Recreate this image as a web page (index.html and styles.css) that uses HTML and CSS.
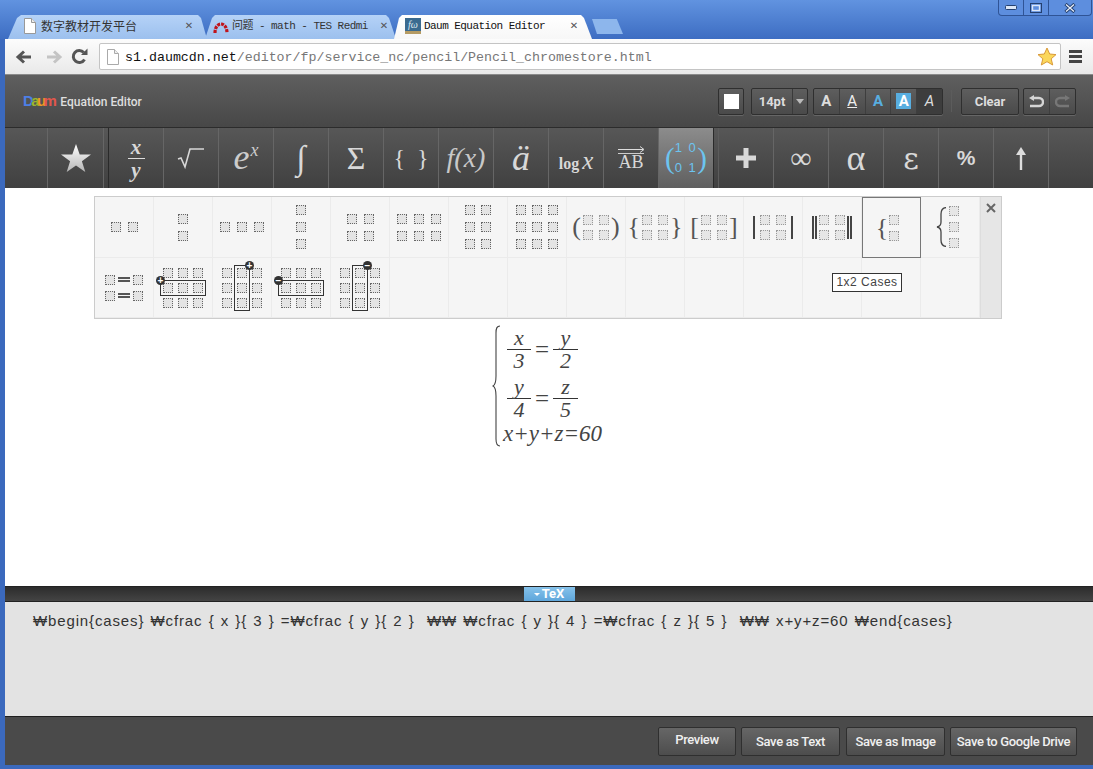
FILE: index.html
```html
<!DOCTYPE html>
<html lang="en">
<head>
    <meta charset="UTF-8">
    <title>Daum Equation Editor</title>
    <link rel="stylesheet" href="styles.css">
</head>
<body>
    <!-- Browser tabs -->
    <div class="tabstrip">
        <div class="tab tab-first">
            <svg class="favicon" viewBox="0 0 16 16"><path d="M2.500.5h7l4 4v11h-11z" fill="#fff" stroke="#999"/><path d="M9.500.5v4h4" fill="#eee" stroke="#999"/></svg>
            <span class="tab-title">数字教材开发平台</span>
            <span class="tab-close">✕</span>
        </div>
        <div class="tab tab-second">
            <svg class="favicon" viewBox="0 0 16 16"><path d="M2 15C2 3 14 3 14 15" fill="none" stroke="#c0141c" stroke-width="3.200" stroke-dasharray="3 1"/></svg>
            <span class="tab-title mono">问题 - math - TES Redmi</span>
            <span class="tab-close">✕</span>
        </div>
        <div class="tab active">
            <span class="fx-icon">fω</span>
            <span class="tab-title mono">Daum Equation Editor</span>
            <span class="tab-close">✕</span>
        </div>
        <div class="newtab"></div>
        <div class="winctl">
            <span class="wbtn w-min"><svg width="12" height="6" viewBox="0 0 12 6"><rect x=".5" y=".5" width="11" height="4" rx="1" fill="#dbe6f7" stroke="#24406f"/></svg></span>
            <span class="wbtn w-max"><svg width="12" height="10" viewBox="0 0 12 10"><rect x=".5" y=".5" width="11" height="9" fill="none" stroke="#24406f"/><rect x="2.500" y="2.500" width="7" height="5" fill="none" stroke="#dbe6f7" stroke-width="1.400"/></svg></span>
            <span class="wbtn w-close"><svg width="12" height="10" viewBox="0 0 12 10"><path d="M1.500 1l9 8M10.500 1l-9 8" stroke="#24406f" stroke-width="3.200"/><path d="M2 1.500l8 7M10 1.500l-8 7" stroke="#e8eef9" stroke-width="1.300"/></svg></span>
        </div>
    </div>

    <div class="window">
        <!-- Browser toolbar -->
        <div class="navbar">
            <svg class="nav-btn" width="18" height="16" viewBox="0 0 18 16"><path d="M16 8H4M9 2.500L3 8l6 5.500" fill="none" stroke="#555" stroke-width="3"/></svg>
            <svg class="nav-btn nav-fwd" width="18" height="16" viewBox="0 0 18 16"><path d="M2 8h12M9 2.500L15 8l-6 5.500" fill="none" stroke="#c4c4c4" stroke-width="3"/></svg>
            <svg class="nav-btn nav-reload" width="17" height="17" viewBox="0 0 17 17"><path d="M13.500 11.500A6 6 0 1 1 12.800 4.500" fill="none" stroke="#555" stroke-width="3"/><path d="M10 7h6.500V.5z" fill="#555"/></svg>
            <div class="omnibox">
                <svg width="12" height="16" viewBox="0 0 12 16"><path d="M.5.500h7l4 4v11H.5z" fill="#fff" stroke="#aaa"/><path d="M7.500.5v4h4" fill="#eee" stroke="#aaa"/></svg>
                <span class="url"><b>s1.daumcdn.net</b>/editor/fp/service_nc/pencil/Pencil_chromestore.html</span>
                <svg class="bookmark" width="20" height="19" viewBox="0 0 20 19"><path d="M10 1l2.700 6 6.300.6-4.800 4.200 1.500 6.200L10 14.700 4.300 18l1.500-6.200L1 7.600 7.300 7z" fill="#fbd75b" stroke="#d99a3a"/></svg>
            </div>
            <div class="menu-btn"><i></i><i></i><i></i></div>
        </div>

        <!-- Editor header -->
        <div class="head">
            <div class="logo"><span class="logo-d">D</span><span class="logo-a">a</span><span class="logo-u">u</span><span class="logo-m">m</span><span class="logo-text">Equation Editor</span></div>
            <div class="head-tools">
                <div class="hbtn colorbtn"><i></i></div>
                <div class="hbtn sizebtn"><span class="size-val">14pt</span><span class="size-arrow"></span></div>
                <div class="hbtn agroup">
                    <span class="a-cell">A</span>
                    <span class="a-cell a-under">A</span>
                    <span class="a-cell a-blue">A</span>
                    <span class="a-cell"><span class="a-fill">A</span></span>
                    <span class="a-cell a-italic">A</span>
                </div>
                <div class="head-sep"></div>
                <div class="hbtn clearbtn">Clear</div>
                <div class="hbtn undogroup">
                    <span class="u-cell"><svg width="15" height="13" viewBox="0 0 15 13"><path d="M4 3h6a3.500 3.500 0 0 1 0 8H1" fill="none" stroke="#d5d5d5" stroke-width="2.400"/><path d="M5 0v6L0 3z" fill="#d5d5d5"/></svg></span>
                    <span class="u-cell"><svg width="15" height="13" viewBox="0 0 15 13"><path d="M11 3H5a3.500 3.500 0 0 0 0 8h9" fill="none" stroke="#777" stroke-width="2.400"/><path d="M10 0v6l5-3z" fill="#777"/></svg></span>
                </div>
            </div>
        </div>

        <!-- Symbol categories -->
        <div class="toolbar">
            <div class="tool first"></div>
            <div class="tool star">
                <svg width="30" height="29" viewBox="0 0 30 29"><defs><linearGradient id="starfill" x1="0" y1="0" x2="0" y2="1"><stop offset="0" stop-color="#fff"/><stop offset="1" stop-color="#b5b5b5"/></linearGradient></defs><path d="M15 0l3.700 10.500H30l-9.100 6.700L24.300 28 15 21.400 5.700 28l3.400-10.800L0 10.500h11.300z" fill="url(#starfill)"/></svg>
            </div>
            <div class="tool-gap"></div>
            <div class="tool"><span class="t-frac"><span>x</span><span>y</span></span></div>
            <div class="tool"><svg width="28" height="24" viewBox="0 0 28 24"><path d="M1 13l3-1 4 9 5-18h14" fill="none" stroke="#d8d8d8" stroke-width="1.600"/></svg></div>
            <div class="tool t-exp">e<sup>x</sup></div>
            <div class="tool t-int">∫</div>
            <div class="tool t-sum">Σ</div>
            <div class="tool t-brace">{&nbsp;&nbsp;}</div>
            <div class="tool t-fx">f(x)</div>
            <div class="tool t-acc">ä</div>
            <div class="tool t-log"><b>log</b><i>x</i></div>
            <div class="tool"><span class="t-vec"><svg width="27" height="7" viewBox="0 0 27 7"><path d="M0 3.500h25M22 .5l4 3-4 3" fill="none" stroke="#ddd"/></svg><span>AB</span></span></div>
            <div class="tool active"><span class="t-mat"><span class="mat-p">(</span><span class="mat-v">1 0<br>0 1</span><span class="mat-p">)</span></span></div>
            <div class="tool-gap narrow"></div>
            <div class="tool"><svg width="22" height="22" viewBox="0 0 22 22"><path d="M11 1v20M1 11h20" stroke="#d8d8d8" stroke-width="5"/></svg></div>
            <div class="tool t-inf">∞</div>
            <div class="tool t-alpha">α</div>
            <div class="tool t-eps">ε</div>
            <div class="tool t-pct">%</div>
            <div class="tool"><svg width="12" height="23" viewBox="0 0 12 23"><path d="M6 23V5" stroke="#ddd" stroke-width="2.400"/><path d="M6 0l5 8H1z" fill="#ddd"/></svg></div>
        </div>

        <!-- Canvas -->
        <div class="canvas">
            <div class="popup">
                <div class="cell"><span class="mx c2"><i></i><i></i></span></div>
                <div class="cell"><span class="mx c1 wide"><i></i><i></i></span></div>
                <div class="cell"><span class="mx c3"><i></i><i></i><i></i></span></div>
                <div class="cell"><span class="mx c1 wide"><i></i><i></i><i></i></span></div>
                <div class="cell"><span class="mx c2"><i></i><i></i><i></i><i></i></span></div>
                <div class="cell"><span class="mx c3"><i></i><i></i><i></i><i></i><i></i><i></i></span></div>
                <div class="cell"><span class="mx c2 wide"><i></i><i></i><i></i><i></i><i></i><i></i></span></div>
                <div class="cell"><span class="mx c3 wide"><i></i><i></i><i></i><i></i><i></i><i></i><i></i><i></i><i></i></span></div>
                <div class="cell"><span class="fence">(</span><span class="mx c2 tight"><i></i><i></i><i></i><i></i></span><span class="fence">)</span></div>
                <div class="cell"><span class="fence">{</span><span class="mx c2 tight"><i></i><i></i><i></i><i></i></span><span class="fence">}</span></div>
                <div class="cell"><span class="fence">[</span><span class="mx c2 tight"><i></i><i></i><i></i><i></i></span><span class="fence">]</span></div>
                <div class="cell"><span class="bar"></span><span class="mx c2 tight"><i></i><i></i><i></i><i></i></span><span class="bar"></span></div>
                <div class="cell"><span class="bar dbl"></span><span class="mx c2 tight"><i></i><i></i><i></i><i></i></span><span class="bar dbl"></span></div>
                <div class="cell selected"><span class="fence pull">{</span><span class="mx c1 tight"><i></i><i></i></span></div>
                <div class="cell big-cases"><svg width="11" height="40" viewBox="0 0 11 40"><path d="M10 .5C6 1 5 3 5 7v8c0 3-1 4.500-4 5 3 .5 4 2 4 5v8c0 4 1 6 5 6.500" fill="none" stroke="#444" stroke-width="1.300"/></svg><span class="mx c1 tight"><i></i><i></i><i></i></span></div>
                <div class="closecol"><svg width="10" height="10" viewBox="0 0 10 10"><path d="M1 1l8 8M9 1l-8 8" stroke="#666" stroke-width="2"/></svg></div>

                <div class="cell"><span class="eqs"><i></i><b></b><i></i><i></i><b></b><i></i></span></div>
                <div class="cell"><span class="mx c3 ins"><i></i><i></i><i></i><i></i><i></i><i></i><i></i><i></i><i></i><span class="hl row"></span><span class="badge row-b">+</span></span></div>
                <div class="cell"><span class="mx c3 ins"><i></i><i></i><i></i><i></i><i></i><i></i><i></i><i></i><i></i><span class="hl col"></span><span class="badge col-b">+</span></span></div>
                <div class="cell"><span class="mx c3 ins"><i></i><i></i><i></i><i></i><i></i><i></i><i></i><i></i><i></i><span class="hl row"></span><span class="badge row-b">−</span></span></div>
                <div class="cell"><span class="mx c3 ins"><i></i><i></i><i></i><i></i><i></i><i></i><i></i><i></i><i></i><span class="hl col"></span><span class="badge col-b">−</span></span></div>
                <div class="cell"></div>
                <div class="cell"></div>
                <div class="cell"></div>
                <div class="cell"></div>
                <div class="cell"></div>
                <div class="cell"></div>
                <div class="cell"></div>
                <div class="cell"></div>
                <div class="cell"></div>
                <div class="cell"></div>

                <div class="tooltip">1x2 Cases</div>
            </div>

            <div class="equation">
                <svg class="brace" width="9" height="122" viewBox="0 0 9 122"><path d="M8 1C5 1 4 3 4 8v43c0 6-1 9-3 10 2 1 3 4 3 10v43c0 5 1 7 4 7" fill="none" stroke="#444" stroke-width="1.100"/></svg>
                <div class="eq-rows">
                    <div class="eq-row"><span class="frac"><span>x</span><span>3</span></span><span class="eq-sign">=</span><span class="frac"><span>y</span><span>2</span></span></div>
                    <div class="eq-row"><span class="frac"><span>y</span><span>4</span></span><span class="eq-sign">=</span><span class="frac"><span>z</span><span>5</span></span></div>
                    <div class="eq-line">x+y+z=60</div>
                </div>
            </div>
        </div>

        <!-- TeX source -->
        <div class="texbar"><span class="textab"><i></i>TeX</span></div>
        <div class="texarea">₩begin{cases} ₩cfrac { x }{ 3 } =₩cfrac { y }{ 2 }  ₩₩ ₩cfrac { y }{ 4 } =₩cfrac { z }{ 5 }  ₩₩ x+y+z=60 ₩end{cases}</div>

        <div class="footer">
            <button class="fbtn preview">Preview</button>
            <button class="fbtn">Save as Text</button>
            <button class="fbtn">Save as Image</button>
            <button class="fbtn">Save to Google Drive</button>
        </div>
    </div>
</body>
</html>
```

FILE: styles.css
```css
* {
    box-sizing: border-box;
}
html, body {
    margin: 0;
    height: 769px;
    overflow: hidden;
}
body {
    display: flex;
    flex-direction: column;
    background: #3b69bd;
    font-family: "Liberation Sans", Arial, sans-serif;
}

/* tabs */
.tabstrip {
    display: flex;
    align-items: flex-end;
    flex: none;
    height: 39px;
    padding-left: 8px;
    background: linear-gradient(#6193e0, #3d6dc2);
}
.tab {
    display: flex;
    align-items: center;
    flex: none;
    height: 24px;
    gap: 3px;
    padding-bottom: 2px;
    background: linear-gradient(#b5d2f7, #9cc0ee);
    clip-path: polygon(0 100%, 7px 3px, 10px 0, calc(100% - 10px) 0, calc(100% - 7px) 3px, 100% 100%);
}
.tab-first {
    width: 199px;
    margin-right: -2px;
    padding-left: 14px;
    padding-right: 12px;
    clip-path: polygon(0 100%, 9px 3px, 13px 0, calc(100% - 9px) 0, calc(100% - 6px) 3px, 100% 100%);
}
.tab-second {
    width: 191px;
    margin-right: -2px;
    padding-left: 8px;
    padding-right: 6px;
}
.tab.active {
    width: 198px;
    padding-left: 11px;
    padding-right: 12px;
    background: linear-gradient(#fff, #f7f7f7);
    clip-path: polygon(0 100%, 5px 3px, 8px 0, calc(100% - 11px) 0, calc(100% - 8px) 3px, 100% 100%);
}
.favicon {
    width: 16px;
    height: 16px;
    flex: none;
}
.fx-icon {
    flex: none;
    width: 16px;
    height: 16px;
    background: #3a6a8f;
    border-bottom: 3px solid #b59b64;
    color: #dfe9f0;
    font: italic 10px/13px "Liberation Serif", serif;
    text-align: center;
}
.tab-title {
    flex: 1;
    min-width: 0;
    overflow: hidden;
    white-space: nowrap;
    color: #333;
    font: 12px/16px "Noto Sans CJK SC", sans-serif;
}
.tab-title.mono {
    font: 11px/16px "Liberation Mono", "Noto Sans CJK SC", monospace;
    letter-spacing: -.55px;
}
.tab.active .tab-title {
    color: #111;
}
.tab-close {
    flex: none;
    width: 12px;
    color: #555;
    font: bold 10px/16px "DejaVu Sans", sans-serif;
    text-align: center;
}
.newtab {
    flex: none;
    width: 31px;
    height: 15px;
    margin-bottom: 5px;
    background: #8db6ec;
    clip-path: polygon(0 0, 80% 0, 100% 100%, 16% 100%);
}
.winctl {
    display: flex;
    align-self: flex-start;
    margin-left: auto;
    margin-right: 1px;
    height: 16px;
    background: #5d8ede;
    border: 1px solid #2f5496;
    border-top: 0;
    border-radius: 0 0 4px 4px;
}
.wbtn {
    display: flex;
    align-items: center;
    justify-content: center;
    width: 25px;
    border-right: 1px solid #2f5496;
}
.w-close {
    width: 42px;
    border-right: 0;
}

.window {
    flex: 1;
    display: flex;
    flex-direction: column;
    margin: 0 0 4px 5px;
    min-height: 0;
}

/* browser toolbar */
.navbar {
    display: flex;
    align-items: center;
    height: 36px;
    flex: none;
    padding: 0 0 0 10px;
    background: linear-gradient(#fcfcfc, #e9e9e9);
    border-bottom: 1px solid #8b8b8b;
}
.nav-btn {
    flex: none;
    margin-right: 12px;
}
.nav-fwd {
    margin-right: 8px;
}
.nav-reload {
    margin-right: 11px;
}
.omnibox {
    flex: 1;
    display: flex;
    align-items: center;
    gap: 6px;
    height: 27px;
    padding: 0 3px 0 7px;
    background: #fff;
    border: 1px solid #c4c4c4;
    border-radius: 2px;
}
.url {
    flex: 1;
    padding-top: 2px;
    font: 13.300px "Liberation Mono", monospace;
    color: #777;
    white-space: nowrap;
}
.url b {
    font-weight: normal;
    color: #111;
}
.menu-btn {
    flex: none;
    width: 28px;
    margin-right: 4px;
    display: flex;
    flex-direction: column;
    gap: 2px;
    align-items: center;
}
.menu-btn i {
    width: 13px;
    height: 3px;
    background: #444;
}

/* editor header */
.head {
    display: flex;
    align-items: center;
    justify-content: space-between;
    flex: none;
    height: 52px;
    padding: 0 17px 0 18px;
    background: linear-gradient(#5f5f5f, #474747);
}
.logo {
    display: flex;
    align-items: baseline;
    font: bold 15px/16px "Liberation Sans", sans-serif;
    letter-spacing: -2.600px;
}
.logo-d { color: #4d7fe6; }
.logo-a { color: #9db52c; }
.logo-u { color: #ee9b22; }
.logo-m { color: #e2574c; }
.logo-text {
    margin-left: 6px;
    color: #dedede;
    font: 500 12px/16px Roboto, sans-serif;
    letter-spacing: 0;
}
.head-tools {
    display: flex;
    align-items: center;
    height: 27px;
}
.hbtn {
    display: flex;
    height: 27px;
    background: linear-gradient(#5e5e5e, #4a4a4a);
    border: 1px solid #2f2f2f;
    border-radius: 2px;
    box-shadow: 0 1px 0 #666;
    color: #ddd;
    font: bold 13px/25px Roboto, sans-serif;
}
.colorbtn {
    width: 26px;
    align-items: center;
    justify-content: center;
    margin-right: 7px;
}
.colorbtn i {
    width: 15px;
    height: 15px;
    background: #fff;
}
.sizebtn {
    width: 57px;
    margin-right: 5px;
}
.size-val {
    width: 41px;
    text-align: center;
    border-right: 1px solid #3a3a3a;
}
.size-arrow {
    width: 0;
    height: 0;
    margin: 10px 0 0 3px;
    border: 4px solid transparent;
    border-top: 5px solid #bbb;
}
.agroup {
    width: 130px;
}
.a-cell {
    flex: 1;
    display: flex;
    align-items: center;
    justify-content: center;
    border-right: 1px solid #3e3e3e;
    font: bold 15px Roboto, sans-serif;
}
.a-cell:last-child {
    border-right: 0;
}
.a-under {
    font-weight: normal;
    text-decoration: underline;
    color: #eee;
}
.a-blue {
    color: #58aee0;
}
.a-fill {
    width: 15px;
    height: 16px;
    background: #58aee0;
    color: #fff;
    text-align: center;
    line-height: 16px;
}
.a-italic {
    background: #3d3d3d;
    font-style: italic;
    font-weight: normal;
}
.head-sep {
    width: 1px;
    height: 22px;
    margin: 0 9px 0 8px;
    background: #5c5c5c;
}
.clearbtn {
    width: 58px;
    justify-content: center;
    margin-right: 4px;
}
.undogroup {
    width: 53px;
}
.u-cell {
    flex: 1;
    display: flex;
    align-items: center;
    justify-content: center;
    border-right: 1px solid #3e3e3e;
}
.u-cell:last-child {
    border-right: 0;
}

/* category toolbar */
.toolbar {
    display: flex;
    flex: none;
    height: 61px;
    background: linear-gradient(#575757, #404040);
    border-top: 1px solid #2c2c2c;
    color: #d8d8d8;
    font-family: "Liberation Serif", serif;
}
.tool {
    display: flex;
    align-items: center;
    justify-content: center;
    flex: none;
    width: 55px;
    border-right: 1px solid #666;
}
.tool.first {
    width: 43px;
}
.tool.star {
    width: 56px;
}
.tool-gap {
    flex: none;
    width: 5px;
    border-right: 1px solid #2a2a2a;
}
.tool-gap.narrow {
    border-right-color: #5c5c5c;
}
.tool.active {
    background: linear-gradient(#8c8c8c, #5f5f5f);
    border-right-color: #2a2a2a;
}
.t-frac {
    display: flex;
    flex-direction: column;
    width: 17px;
    text-align: center;
    font: italic bold 21px/22px "Liberation Serif", serif;
}
.t-frac span:first-child {
    border-bottom: 1px solid #ddd;
}
.t-exp {
    font: italic 36px "Liberation Serif", serif;
    color: #ccc;
    padding-bottom: 2px;
}
.t-exp sup {
    font-size: 18px;
    line-height: 1;
    margin: -14px 0 0 1px;
}
.t-int {
    font: italic 34px "Liberation Serif", serif;
}
.t-sum {
    font: 32px "Liberation Serif", serif;
}
.t-brace {
    font: 24px "Liberation Serif", serif;
}
.t-fx {
    font: italic 28px "Liberation Serif", serif;
    color: #c8c8c8;
}
.t-acc {
    font: italic 36px "Liberation Serif", serif;
}
.t-log {
    align-items: baseline;
    padding-top: 19px;
    font: 16px "Liberation Serif", serif;
}
.t-log i {
    font-size: 25px;
    margin-left: 3px;
}
.t-vec {
    display: flex;
    flex-direction: column;
    align-items: center;
    font: 18px/17px "Liberation Serif", serif;
}
.t-vec span {
    border-top: 1px solid #ccc;
}
.t-mat {
    display: flex;
    align-items: center;
    color: #6cc4f0;
}
.mat-p {
    font: 29px/36px "Liberation Serif", serif;
}
.mat-v {
    font: 13px/20px "Liberation Sans", sans-serif;
    white-space: nowrap;
    letter-spacing: 1.500px;
}
.t-inf {
    font: 30px "Liberation Serif", serif;
}
.t-alpha {
    font: 36px "Liberation Serif", serif;
}
.t-eps {
    font: 30px "DejaVu Serif", serif;
}
.t-pct {
    font: bold 21px "Liberation Sans", sans-serif;
}

/* canvas with the template popup */
.canvas {
    flex: none;
    height: 398px;
    display: flex;
    flex-direction: column;
    align-items: center;
    background: #fff;
    padding-top: 8px;
}
.popup {
    position: relative;
    display: grid;
    grid-template-columns: repeat(15, 59px) 1fr;
    grid-template-rows: 61px 60px;
    width: 908px;
    height: 123px;
    margin-left: -2px;
    background: #f5f5f5;
    border: 1px solid #ccc;
}
.cell {
    display: flex;
    align-items: center;
    justify-content: center;
    gap: 2px;
    border-right: 1px solid #ebebeb;
    border-bottom: 1px solid #ebebeb;
}
.cell.selected {
    padding-right: 8px;
    border: 1px solid #777;
}
.cell.big-cases {
    padding-right: 5px;
}
.closecol {
    grid-row: 1 / span 2;
    grid-column: 16;
    padding: 6px 0 0 5px;
    background: #e6e6e6;
    border-left: 1px solid #ddd;
}
.closecol svg {
    display: block;
}
.mx {
    display: grid;
    gap: 7px;
}
.mx.wide {
    gap: 7px 6px;
}
.mx.tight {
    gap: 5px 6px;
}
.mx.tight.c1 {
    gap: 6px;
}
.mx.c1 { grid-template-columns: 10px; }
.mx.c2 { grid-template-columns: 10px 10px; }
.mx.c3 { grid-template-columns: 10px 10px 10px; }
.mx i, .eqs i {
    display: block;
    width: 10px;
    height: 10px;
    background: #e4e4e4;
    border: 1px dotted #666;
}
.mx.tight i {
    background: #e6e6e6;
    border-color: #999;
}
.mx.ins {
    position: relative;
    gap: 5px;
}
.hl {
    position: absolute;
    border: 1px solid #333;
}
.hl.row {
    left: -3px;
    right: -3px;
    top: 12px;
    height: 16px;
}
.hl.col {
    top: -3px;
    bottom: -3px;
    left: 12px;
    width: 16px;
}
.badge {
    position: absolute;
    width: 9px;
    height: 9px;
    border-radius: 50%;
    background: #333;
    color: #fff;
    font: bold 10px/9px "Liberation Sans", sans-serif;
    text-align: center;
}
.row-b {
    left: -7px;
    top: 8px;
}
.col-b {
    top: -7px;
    left: 23px;
}
.fence {
    color: #555;
    font: 26px/30px "Liberation Serif", serif;
}
.fence.pull {
    margin-right: -1px;
}
.bar {
    width: 2px;
    height: 23px;
    background: #444;
    margin: 0 3px;
}
.bar.dbl {
    width: 5px;
    background: none;
    border-left: 2px solid #444;
    border-right: 2px solid #444;
    margin: 0;
}
.eqs {
    display: grid;
    grid-template-columns: 10px 12px 10px;
    gap: 6px 3px;
    align-items: center;
}
.eqs b {
    height: 5px;
    border-top: 2px solid #555;
    border-bottom: 2px solid #555;
}
.tooltip {
    position: absolute;
    left: 737px;
    top: 76px;
    width: 70px;
    height: 19px;
    background: #fff;
    border: 1px solid #333;
    color: #444;
    font: 12px/17px "Liberation Sans", sans-serif;
    letter-spacing: .5px;
    text-align: center;
}

/* typeset equation */
.equation {
    display: flex;
    width: 110px;
    margin: 4px 0 0 -4px;
    color: #444;
    font: italic 22px/22px "Liberation Serif", serif;
}
.brace {
    flex: none;
    margin-top: 2px;
}
.eq-rows {
    display: flex;
    flex-direction: column;
    padding-left: 2px;
}
.eq-row {
    display: flex;
    align-items: center;
    padding: 4px 0 1px 4px;
}
.eq-row + .eq-row {
    padding: 3px 0 0 4px;
}
.frac {
    display: flex;
    flex-direction: column;
    text-align: center;
    width: 24px;
}
.frac span:first-child {
    border-bottom: 1px solid #333;
}
.eq-sign {
    width: 22px;
    text-align: center;
    font: 25px/22px "Liberation Serif", serif;
}
.eq-sign + .frac {
    width: 25px;
}
.eq-line {
    margin-top: 1px;
    font-size: 23px;
    line-height: 24px;
    white-space: nowrap;
}

/* tex source */
.texbar {
    display: flex;
    justify-content: center;
    flex: none;
    height: 16px;
    background: linear-gradient(#2c2c2c, #444);
    border-top: 1px solid #222;
    border-bottom: 1px solid #222;
}
.textab {
    display: block;
    width: 51px;
    height: 14px;
    background: linear-gradient(#86c2ea, #5ea6db);
    color: #fff;
    font: bold 13px/14px Roboto, sans-serif;
    text-align: center;
}
.textab i {
    display: inline-block;
    width: 0;
    height: 0;
    margin-right: 2px;
    vertical-align: 2px;
    border: 3px solid transparent;
    border-top: 3px solid #fff;
    border-bottom: 0;
}
.texarea {
    flex: 1;
    min-height: 0;
    padding: 9px 28px;
    background: #e3e3e3;
    color: #333;
    font: 15px/20px "Liberation Sans", "Noto Sans CJK KR", sans-serif;
    letter-spacing: .865px;
    word-spacing: 1.200px;
    white-space: pre-wrap;
}
.footer {
    display: flex;
    justify-content: flex-end;
    align-items: center;
    gap: 5px;
    flex: none;
    height: 49px;
    padding: 0 16px 0 0;
    background: #4a4a4a;
    border-top: 1px solid #1f1f1f;
}
.fbtn {
    height: 29px;
    padding: 0 4px;
    background: linear-gradient(#666, #4d4d4d);
    border: 1px solid #2f2f2f;
    border-radius: 2px;
    color: #f0f0f0;
    font: 500 13px Roboto, sans-serif;
    letter-spacing: -.35px;
    white-space: nowrap;
}
.fbtn:nth-child(2), .fbtn:nth-child(3) {
    width: 99px;
}
.fbtn:nth-child(3) {
    margin-left: 1px;
}
.preview {
    width: 78px;
    padding-bottom: 3px;
}
.fbtn:last-child {
    width: 127px;
}
```
